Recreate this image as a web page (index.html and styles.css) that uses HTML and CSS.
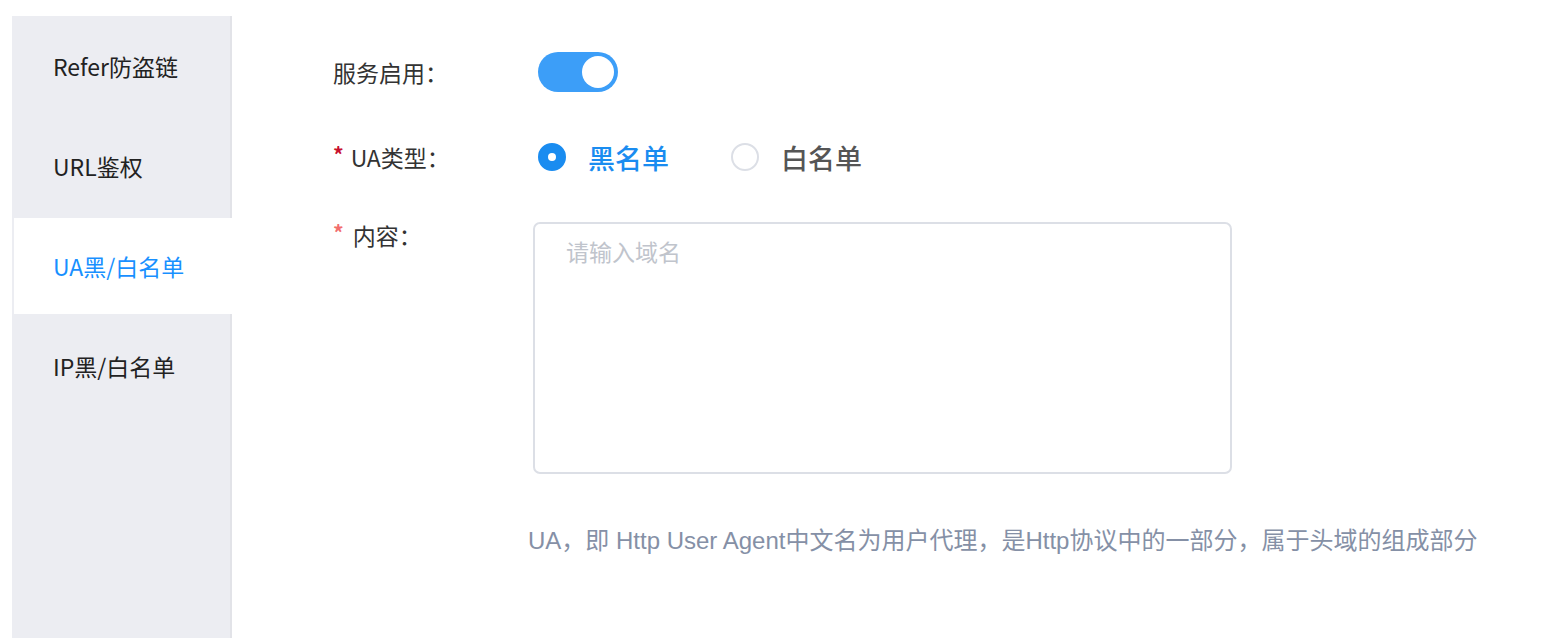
FILE: index.html
```html
<!DOCTYPE html>
<html lang="zh-CN">
<head>
  <meta charset="UTF-8" />
  <title>UA黑/白名单</title>
  <meta name="viewport" content="width=device-width, initial-scale=1.0" />
  <link rel="stylesheet" href="styles.css">
</head>
<body>

  <div class="page">
    <ul class="side-nav">
      <li class="nav-item">Refer防盗链</li>
      <li class="nav-item">URL鉴权</li>
      <li class="nav-item active">UA黑/白名单</li>
      <li class="nav-item">IP黑/白名单</li>
    </ul>

    <div class="content">
      <div class="form-row">
        <label class="form-label">服务启用：</label>
        <div class="form-control">
          <span class="switch on"><span class="switch-knob"></span></span>
        </div>
      </div>

      <div class="form-row">
        <label class="form-label"><span class="req">*</span>UA类型：</label>
        <div class="form-control radios">
          <span class="radio checked"><span class="radio-dot"></span>黑名单</span>
          <span class="radio"><span class="radio-dot"></span>白名单</span>
        </div>
      </div>

      <div class="form-row top">
        <label class="form-label"><span class="req light">*</span>内容：</label>
        <div class="form-control">
          <textarea class="textarea" placeholder="请输入域名"></textarea>
        </div>
      </div>

      <p class="hint">UA，即 Http User Agent中文名为用户代理，是Http协议中的一部分，属于头域的组成部分</p>
    </div>
  </div>

</body>
</html>
```

FILE: styles.css
```css
html, body {
  margin: 0;
  padding: 0;
  background: white;
  font-family: 'Noto Sans CJK SC', 'Noto Sans', sans-serif;
  color: #333;
}

.page {
  display: flex;
  height: 638px;
  padding: 16px 0 0 12px;
  box-sizing: border-box;
}

/* left menu */
.side-nav {
  list-style: none;
  margin: 0;
  padding: 0;
  width: 220px;
  background: #ecedf2;
  border-right: 2px solid #e2e3e8;
  box-sizing: border-box;
  flex-shrink: 0;
}

.nav-item {
  height: 100px;
  display: flex;
  align-items: center;
  padding-left: 41px;
  font-size: 23px;
  color: #222;
}

.nav-item.active {
  background: white;
  color: #1890ff;
  margin: 2px -2px 2px 2px;
  height: 96px;
  padding-left: 39px;
}

/* form */
.content {
  padding: 36px 0 0 101px;
  flex: 1;
}

.form-row {
  display: flex;
  align-items: center;
  min-height: 40px;
  margin-bottom: 45px;
}

.form-row.top {
  align-items: flex-start;
  margin-bottom: 0;
}

.form-label {
  width: 200px;
  flex-shrink: 0;
  font-size: 23px;
  color: #333;
  line-height: 30px;
}

.form-row.top .form-label {
  margin-top: -2px;
}

.req {
  color: #c8102e;
  font-size: 21px;
  font-weight: 700;
  vertical-align: top;
  margin-right: 7px;
  line-height: 24px;
}

.req.light {
  color: #f26d6d;
  margin-right: 9px;
}

.form-control {
  display: flex;
  align-items: center;
}

/* switch */
.switch {
  display: inline-flex;
  justify-content: flex-end;
  align-items: center;
  width: 80px;
  height: 40px;
  border-radius: 20px;
  background: #3c9ef8;
  padding: 4px;
  box-sizing: border-box;
  margin-left: 5px;
}

.switch-knob {
  width: 32px;
  height: 32px;
  border-radius: 50%;
  background: white;
}

/* radios */
.radios {
  gap: 62px;
  margin-left: 5px;
}

.radio {
  display: inline-flex;
  align-items: center;
  font-size: 27px;
  font-weight: 500;
  color: #555;
}

.radio-dot {
  width: 28px;
  height: 28px;
  border-radius: 50%;
  border: 2px solid #dcdfe6;
  box-sizing: border-box;
  margin-right: 22px;
  display: inline-flex;
  align-items: center;
  justify-content: center;
}

.radio.checked {
  color: #1a8cf0;
}

.radio.checked .radio-dot {
  background: #1a8cf0;
  border-color: #1a8cf0;
}

.radio.checked .radio-dot::after {
  content: "";
  width: 8px;
  height: 8px;
  border-radius: 50%;
  background: white;
}

/* textarea */
.textarea {
  width: 699px;
  height: 252px;
  border: 2px solid #dcdfe6;
  border-radius: 7px;
  box-sizing: border-box;
  padding: 10px 31px;
  font-family: inherit;
  font-size: 23px;
  resize: none;
  outline: none;
}

.textarea::placeholder {
  color: #c0c4cc;
}

.hint {
  margin: 52px 0 0 195px;
  font-size: 24px;
  line-height: 30px;
  color: #8590a6;
  font-family: 'Liberation Sans', 'Noto Sans CJK SC', sans-serif;
  white-space: nowrap;
}
```
